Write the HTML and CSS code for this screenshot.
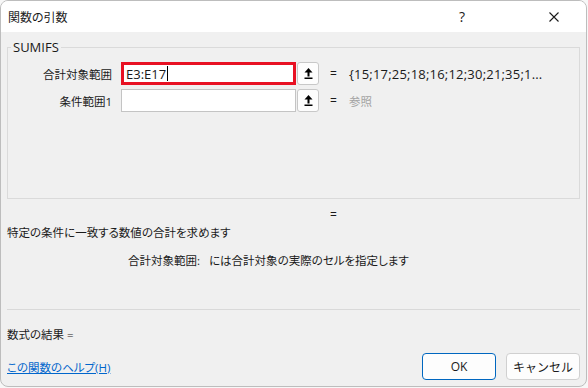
FILE: index.html
```html
<!DOCTYPE html>
<html lang="ja">

<head>
    <meta charset="UTF-8">
    <title>関数の引数</title>
    <link rel="stylesheet" href="styles.css">
</head>

<body>
    <div class="dialog">
        <div class="titlebar">
            <span class="title">関数の引数</span>
            <span class="help">?</span>
            <span class="close">
                <svg width="10" height="10" viewBox="0 0 10 10">
                    <path d="M0.5 0.5 L9.5 9.5 M9.5 0.5 L0.5 9.5" stroke="#1a1a1a" stroke-width="1.1" fill="none" />
                </svg>
            </span>
        </div>
        <div class="content">
            <fieldset class="group">
                <legend>SUMIFS</legend>
                <div class="arg">
                    <label>合計対象範囲</label>
                    <div class="ref focused">E3:E17<i class="caret"></i></div>
                    <button class="collapse" type="button">
                        <svg width="9" height="11" viewBox="0 0 9 11">
                            <path d="M4.5 0 L0.5 4.5 H8.5 Z" fill="#000" />
                            <rect x="3.5" y="4" width="2" height="4.5" fill="#000" />
                            <rect x="0.5" y="9.5" width="8" height="1.5" fill="#000" />
                        </svg>
                    </button>
                    <span class="eq">=</span>
                    <span class="val">{15;17;25;18;16;12;30;21;35;1...</span>
                </div>
                <div class="arg">
                    <label>条件範囲1</label>
                    <div class="ref"></div>
                    <button class="collapse" type="button">
                        <svg width="9" height="11" viewBox="0 0 9 11">
                            <path d="M4.5 0 L0.5 4.5 H8.5 Z" fill="#000" />
                            <rect x="3.5" y="4" width="2" height="4.5" fill="#000" />
                            <rect x="0.5" y="9.5" width="8" height="1.5" fill="#000" />
                        </svg>
                    </button>
                    <span class="eq">=</span>
                    <span class="val muted">参照</span>
                </div>
            </fieldset>
            <div class="result"><span class="eq">=</span></div>
            <p class="desc">特定の条件に一致する数値の合計を求めます</p>
            <p class="argdesc"><span class="argname">合計対象範囲:</span>には合計対象の実際のセルを指定します</p>
            <hr>
            <p class="formula">数式の結果 =</p>
            <div class="footer">
                <a href="#">この関数のヘルプ(H)</a>
                <div class="buttons">
                    <button class="btn primary" type="button">OK</button>
                    <button class="btn" type="button">キャンセル</button>
                </div>
            </div>
        </div>
    </div>
</body>

</html>
```

FILE: styles.css
```css
* {
    box-sizing: border-box;
}

body {
    margin: 0;
    background-color: #f7f7f7;
    font-family: "Open Sans", "Noto Sans CJK JP", sans-serif;
    font-size: 11.5px;
    font-feature-settings: "palt";
    color: #1a1a1a;
}

.dialog {
    width: 587px;
    height: 387px;
    border: 1px solid #bdbdbd;
    border-radius: 8px;
    overflow: hidden;
    background-color: #f0f0f0;
    display: flex;
    flex-direction: column;
}

.titlebar {
    height: 31px;
    flex-shrink: 0;
    display: flex;
    align-items: center;
    padding-left: 7px;
    background-color: #fff;
    font-size: 12px;
}

.title {
    flex: 1;
}

.help {
    width: 90px;
    font-size: 14px;
}

.close {
    display: flex;
    width: 37px;
    margin-top: 1px;
}

.content {
    flex: 1;
    padding: 0 6px;
    display: flex;
    flex-direction: column;
}

.group {
    margin: 6px 0 0;
    padding: 6px 0 0 0;
    height: 161px;
    border: 1px solid #dadada;
}

.group legend {
    margin-left: 3px;
    padding: 0 2px;
    font-size: 13px;
}

.arg {
    display: flex;
    align-items: center;
    height: 23px;
    margin-bottom: 4px;
}

.arg label {
    width: 104px;
    text-align: right;
}

.ref {
    width: 175px;
    height: 23px;
    margin-left: 9px;
    padding: 0 4px;
    display: flex;
    align-items: center;
    background-color: #fff;
    border: 1px solid #c4c4c4;
    font-size: 13px;
}

.ref.focused {
    border: 3px solid #e81123;
    padding-left: 2px;
}

.caret {
    width: 1px;
    height: 15px;
    margin-left: 1px;
    background-color: #000;
}

.collapse {
    width: 22px;
    height: 23px;
    margin-left: 1px;
    padding: 0;
    display: flex;
    justify-content: center;
    align-items: center;
    background-color: #fdfdfd;
    border: 1px solid #c8c8c8;
    border-radius: 3px;
}

.eq {
    margin-left: 11px;
    width: 7px;
    font-size: 12px;
}

.val {
    margin-left: 12px;
    font-size: 13px;
    letter-spacing: 0.2px;
    white-space: nowrap;
}

.val.muted {
    font-size: 11.5px;
    letter-spacing: 0;
    color: #a3a3a3;
}

.result {
    height: 16px;
    margin-top: 7px;
    padding-left: 323px;
}

.result .eq {
    margin-left: 0;
}

p {
    margin: 0;
    line-height: 16px;
}

.desc {
    margin-top: 3px;
}

.argdesc {
    margin-top: 12px;
    padding-left: 121px;
}

.argname {
    margin-right: 9px;
}

hr {
    width: 100%;
    margin: 40px 0 0;
    border: none;
    border-top: 1px solid #d9d9d9;
}

.formula {
    margin-top: 17px;
}

.footer {
    margin-top: 10px;
    display: flex;
    align-items: center;
    justify-content: space-between;
}

.footer a {
    color: #0066cc;
}

.buttons {
    display: flex;
    gap: 10px;
}

.btn {
    width: 74px;
    height: 27px;
    font-family: inherit;
    font-size: 12px;
    color: #1a1a1a;
    background-color: #fdfdfd;
    border: 1px solid #d0d0d0;
    border-radius: 4px;
}

.btn.primary {
    border: 1px solid #0067c0;
}
```
